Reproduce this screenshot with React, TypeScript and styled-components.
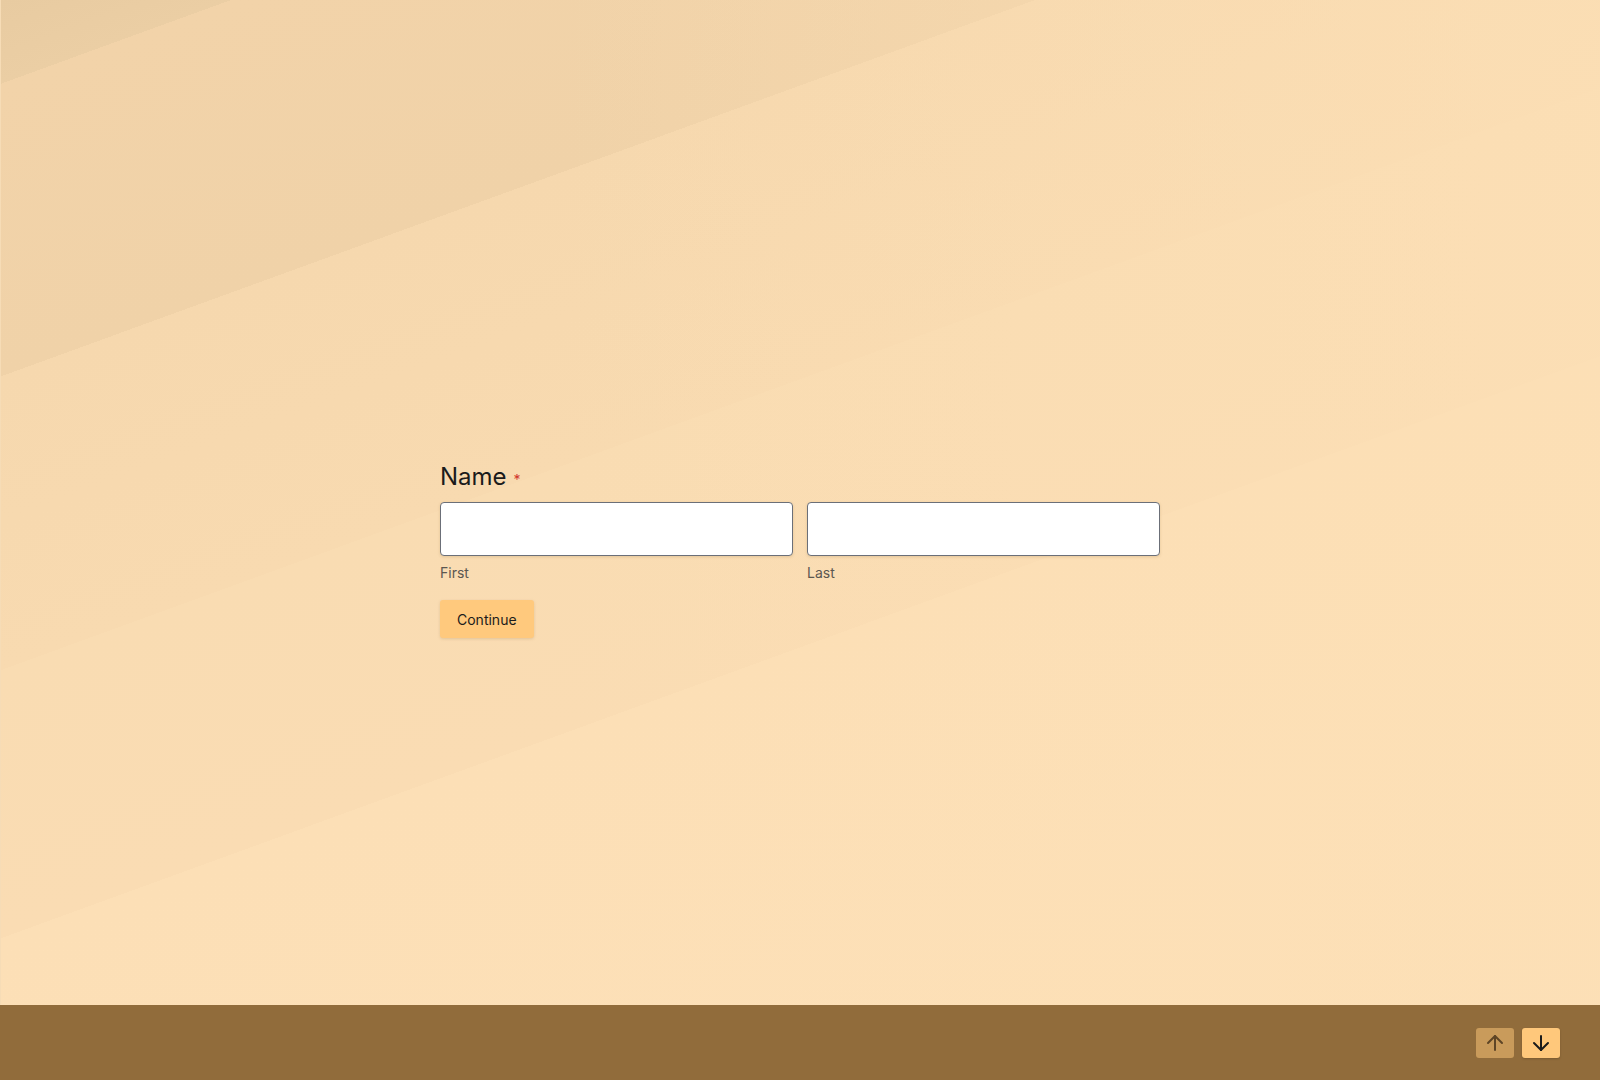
import { ArrowDown, ArrowUp } from 'lucide-react';
import styled, { createGlobalStyle } from 'styled-components';

const GlobalStyle = createGlobalStyle`
  html, body {
    margin: 0;
    padding: 0;
  }
  body {
    font-family: Inter, "Noto Sans", "Liberation Sans", sans-serif;
    color: #1b1b1b;
  }
  * {
    box-sizing: border-box;
  }
`;

const Page = styled.div`
  height: 100vh;
  display: flex;
  flex-direction: column;
`;

// diagonal sand bands, darker in the top-left corner, fading out to the right
const Stage = styled.main`
  flex: 1;
  display: flex;
  justify-content: center;
  align-items: center;
  padding-top: 94px;
  box-shadow: inset 1px 0 0 #f6dcb6;
  background:
    linear-gradient(
      90deg,
      rgba(252, 223, 181, 0) 0%,
      rgba(252, 223, 181, 0) 35%,
      rgba(252, 223, 181, 0.75) 100%
    ),
    linear-gradient(
      160deg,
      #e8cba1 0px,
      #ebcea4 79px,
      #f2d3a9 79px,
      #f0d2a8 354px,
      #f6d8ae 354px,
      #f8dab0 630px,
      #f9dcb2 630px,
      #fadcb3 882px,
      #fcdfb6 882px,
      #fde0b8 100%
    );
`;

const Form = styled.form`
  width: 720px;
  display: flex;
  flex-direction: column;
`;

const Question = styled.div`
  font-size: 24px;
  line-height: 32px;
  font-weight: 400;
  color: #1b1b1b;
  margin-bottom: 6px;
`;

const Required = styled.span`
  font-size: 14px;
  color: #d0352b;
  margin-left: 7px;
`;

const FieldRow = styled.div`
  display: grid;
  grid-template-columns: 1fr 1fr;
  gap: 14px;
`;

const Field = styled.label`
  display: flex;
  flex-direction: column;
  gap: 7px;
`;

const TextInput = styled.input`
  height: 54px;
  width: 100%;
  border: 1px solid #6b6f78;
  border-radius: 4px;
  background: #ffffff;
  padding: 0 14px;
  font-family: inherit;
  font-size: 16px;
  box-shadow: 0 1px 3px rgba(120, 90, 40, 0.18);
  outline: none;
`;

const SubLabel = styled.span`
  font-size: 14px;
  line-height: 20px;
  color: #5b5750;
`;

const ContinueButton = styled.button`
  align-self: flex-start;
  margin-top: 17px;
  height: 38px;
  padding: 0 17px;
  border: none;
  border-radius: 3px;
  background: #ffc97d;
  color: #1b1b1b;
  font-family: inherit;
  font-size: 14px;
  cursor: pointer;
  box-shadow: 0 1px 3px rgba(140, 100, 40, 0.2);
`;

const Footer = styled.footer`
  height: 75px;
  background: #916c3b;
  display: flex;
  justify-content: flex-end;
  align-items: center;
  gap: 8px;
  padding-right: 40px;
`;

const NavButton = styled.button<{ $active: boolean }>`
  width: 38px;
  height: 30px;
  border: none;
  border-radius: 3px;
  display: flex;
  align-items: center;
  justify-content: center;
  padding: 0;
  cursor: pointer;
  background: ${props => (props.$active ? '#ffc87b' : '#c99b5b')};
  color: ${props => (props.$active ? '#1b1b1b' : '#5e4526')};
  box-shadow: ${props => (props.$active ? '0 1px 2px rgba(60, 40, 10, 0.25)' : 'none')};
`;

const App = () => {
  return (
    <Page>
      <GlobalStyle />
      <Stage>
        <Form onSubmit={e => e.preventDefault()}>
          <Question>
            Name<Required>*</Required>
          </Question>
          <FieldRow>
            <Field>
              <TextInput type="text" />
              <SubLabel>First</SubLabel>
            </Field>
            <Field>
              <TextInput type="text" />
              <SubLabel>Last</SubLabel>
            </Field>
          </FieldRow>
          <ContinueButton type="submit">Continue</ContinueButton>
        </Form>
      </Stage>
      <Footer>
        <NavButton $active={false} aria-label="Previous">
          <ArrowUp size={24} strokeWidth={2} />
        </NavButton>
        <NavButton $active={true} aria-label="Next">
          <ArrowDown size={24} strokeWidth={2} />
        </NavButton>
      </Footer>
    </Page>
  );
};

export default App;
